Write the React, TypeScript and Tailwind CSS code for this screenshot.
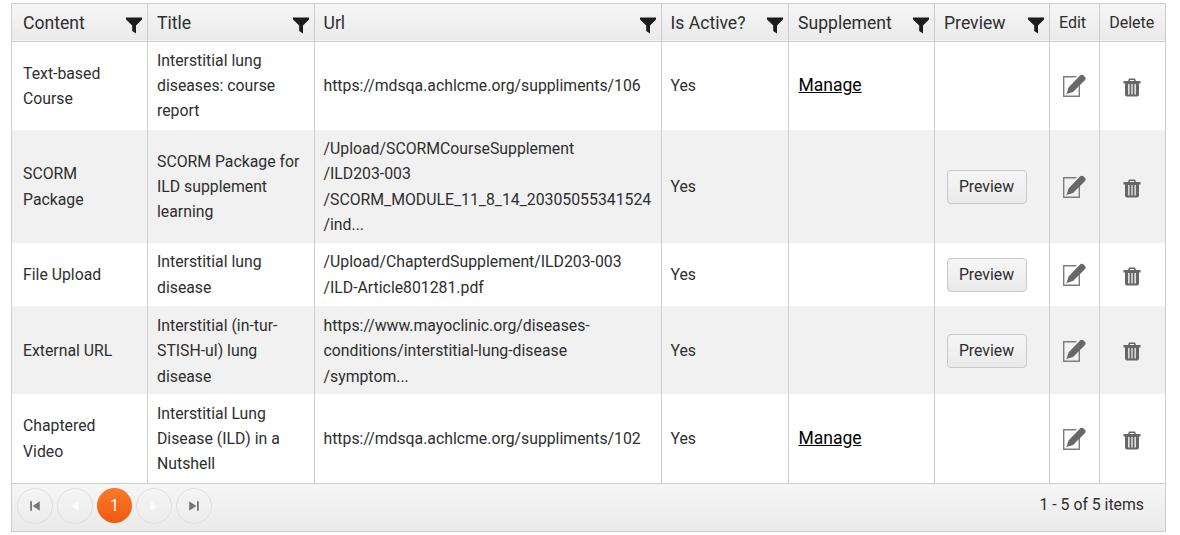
import * as React from 'react';

const rows = [
  { content: ['Text-based', 'Course'], title: ['Interstitial lung', 'diseases: course', 'report'], url: ['https://mdsqa.achlcme.org/suppliments/106'], manage: true, preview: false, h: 'h-[89px]' },
  { content: ['SCORM', 'Package'], title: ['SCORM Package for', 'ILD supplement', 'learning'], url: ['/Upload/SCORMCourseSupplement', '/ILD203-003', '/SCORM_MODULE_11_8_14_20305055341524', '/ind...'], manage: false, preview: true, h: 'h-[113px]' },
  { content: ['File Upload'], title: ['Interstitial lung', 'disease'], url: ['/Upload/ChapterdSupplement/ILD203-003', '/ILD-Article801281.pdf'], manage: false, preview: true, h: 'h-[63px]' },
  { content: ['External URL'], title: ['Interstitial (in-tur-', 'STISH-ul) lung', 'disease'], url: ['https://www.mayoclinic.org/diseases-', 'conditions/interstitial-lung-disease', '/symptom...'], manage: false, preview: true, h: 'h-[88px]' },
  { content: ['Chaptered', 'Video'], title: ['Interstitial Lung', 'Disease (ILD) in a', 'Nutshell'], url: ['https://mdsqa.achlcme.org/suppliments/102'], manage: true, preview: false, h: 'h-[89px]' },
];

function FilterIcon() {
  return (
    <svg width="16" height="17" viewBox="0 0 16 17" className="absolute right-[5px] top-[13px]" aria-hidden="true">
      <path d="M0 0.5H16V2.5L10 8.5V16.5L6.2 14V8.5L0 2.5Z" fill="#1c1c1c" />
    </svg>
  );
}

function EditIcon() {
  return (
    <svg width="23" height="23" viewBox="0 0 23 23" aria-hidden="true" className="mx-auto">
      <path d="M0 2H14L12.6 3.4H1.4V21.6H15.6V11L17 9.6V23H0Z" fill="#7d7d7d" />
      <path d="M3.5 20L5.5 13.5L17 1.6C18 .6 19.4 .5 20.4 1.3L22 2.9C23 4 22.8 5.2 21.8 6.2L10 18Z" fill="#686868" />
      <path d="M3.2 20.4L5.2 19.8L4 18.6Z" fill="#9a9a9a" />
    </svg>
  );
}

function TrashIcon() {
  return (
    <svg width="18" height="19" viewBox="0 0 18 19" aria-hidden="true" className="mx-auto mt-[3px]">
      <path fillRule="evenodd" fill="#666" d="M6 0.5H12L13 3H17.5V5.5H16V16.5C16 17.8 15.2 18.5 14 18.5H4C2.8 18.5 2 17.8 2 16.5V5.5H0.5V3H5ZM7 2L6.7 3H11.3L11 2ZM5.2 6V16.5H6.5V6ZM8.4 6V16.5H9.6V6ZM11.5 6V16.5H12.8V6Z" />
    </svg>
  );
}

function PagerButton({ d }: { d: string }) {
  return (
    <span className="flex h-9 w-9 items-center justify-center rounded-full border border-[#dedede]">
      <svg width="12" height="12" viewBox="0 0 10 10" aria-hidden="true">
        <path d={d} fill="currentColor" />
      </svg>
    </span>
  );
}

const th = 'relative border-l border-[#cdcdcd] pl-[9px] pt-[2px] text-left align-middle font-normal';
const thWide = 'relative border-l border-[#cdcdcd] pl-[9.5px] pt-[2px] text-left align-middle font-normal';

export default function App() {
  return (
    <div className="h-[535px] w-[1180px] overflow-hidden bg-white pl-[11px] pt-[3px] font-['Roboto',sans-serif] text-[#2e2e2e]">
      <div className="w-[1155px] border border-[#cdcdcd]">
        <table className="w-full table-fixed border-collapse text-[15.8px] leading-[25.2px]">
          <colgroup>
            <col className="w-[135px]" />
            <col className="w-[167px]" />
            <col className="w-[347px]" />
            <col className="w-[127px]" />
            <col className="w-[146px]" />
            <col className="w-[115px]" />
            <col className="w-[50px]" />
            <col className="w-[66px]" />
          </colgroup>
          <thead>
            <tr className="h-[37px] border-b border-[#cdcdcd] bg-gradient-to-b from-[#f6f6f6] to-[#eaeaea] text-[17.6px]">
              <th className="relative pl-[11px] pt-[2px] text-left font-normal">Content<FilterIcon /></th>
              <th className={thWide}>Title<FilterIcon /></th>
              <th className={th}>Url<FilterIcon /></th>
              <th className={th}>Is Active?<FilterIcon /></th>
              <th className={thWide}>Supplement<FilterIcon /></th>
              <th className={thWide}>Preview<FilterIcon /></th>
              <th className="border-l border-[#cdcdcd] pr-[3px] text-center text-[16px] font-normal">Edit</th>
              <th className="border-l border-[#cdcdcd] pr-[1px] text-center text-[16px] font-normal">Delete</th>
            </tr>
          </thead>
          <tbody>
            {rows.map((r, i) => {
              const pad = i === 3 ? 'pt-[2px]' : '';
              return (
                <tr key={r.content[0]} className={`${r.h} ${i % 2 === 1 ? 'bg-[#f1f1f1]' : 'bg-white'}`}>
                  <td className={`pl-[11px] ${pad}`}>{r.content.map((l) => <div key={l}>{l}</div>)}</td>
                  <td className={`border-l border-[#cdcdcd] pl-[9.5px] ${pad}`}>{r.title.map((l) => <div key={l}>{l}</div>)}</td>
                  <td className={`border-l border-[#cdcdcd] pl-[9px] whitespace-nowrap ${pad}`}>{r.url.map((l) => <div key={l}>{l}</div>)}</td>
                  <td className={`border-l border-[#cdcdcd] pl-[9px] ${pad}`}>Yes</td>
                  <td className="border-l border-[#cdcdcd] pl-[10px]">
                    {r.manage && <a className="text-[17.5px] text-black underline">Manage</a>}
                  </td>
                  <td className={`border-l border-[#cdcdcd] pl-[12px] ${pad}`}>
                    {r.preview && (
                      <button className="h-[34px] w-[80px] rounded-[4px] border border-[#c9c9c9] bg-gradient-to-b from-[#f6f6f6] to-[#eaeaea] text-[15.8px]">
                        Preview
                      </button>
                    )}
                  </td>
                  <td className="border-l border-[#cdcdcd]"><EditIcon /></td>
                  <td className="border-l border-[#cdcdcd]"><TrashIcon /></td>
                </tr>
              );
            })}
          </tbody>
        </table>
        <div className="flex h-[48px] items-center justify-between border-t border-[#cdcdcd] bg-gradient-to-b from-[#f6f6f6] to-[#eaeaea] pb-[6px] pl-[5px] pr-[21px]">
          <div className="mt-[2px] flex items-center gap-[4px] text-[#777]">
            <PagerButton d="M1 1H2.5V9H1ZM9 1V9L3 5Z" />
            <span className="text-[#fbfbfb]"><PagerButton d="M8 1V9L2 5Z" /></span>
            <span className="flex h-[35px] w-[35px] items-center justify-center rounded-full bg-gradient-to-b from-[#fb7a2a] to-[#f05a0c] text-[16px] text-white">1</span>
            <span className="text-[#fbfbfb]"><PagerButton d="M2 1V9L8 5Z" /></span>
            <PagerButton d="M1 1V9L7 5ZM7.5 1H9V9H7.5Z" />
          </div>
          <span className="text-[15.8px]">1 - 5 of 5 items</span>
        </div>
      </div>
    </div>
  );
}
